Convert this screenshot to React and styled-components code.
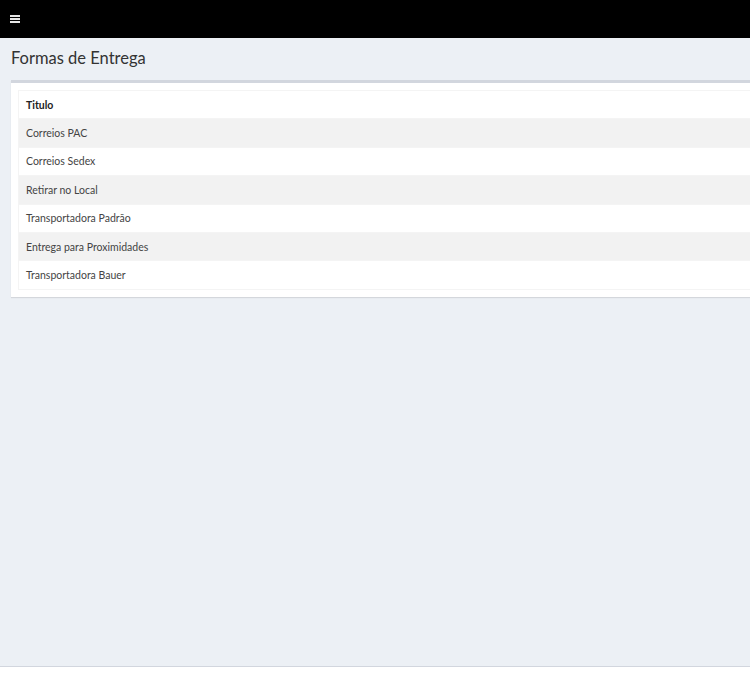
import React from "react";
import styled, { createGlobalStyle } from "styled-components";

const entregas = [
  "Correios PAC",
  "Correios Sedex",
  "Retirar no Local",
  "Transportadora Padrão",
  "Entrega para Proximidades",
  "Transportadora Bauer",
];

const GlobalStyle = createGlobalStyle`
  html, body {
    margin: 0;
    padding: 0;
    overflow: hidden;
  }
  body {
    font-family: Lato, "Noto Sans", sans-serif;
    background: #ecf0f5;
    color: #333;
  }
`;

const Wrapper = styled.div`
  display: flex;
  flex-direction: column;
  min-height: 100vh;
  width: 1000px;
`;

const Navbar = styled.header`
  height: 38px;
  background: #000;
  display: flex;
  align-items: center;
  padding-left: 10px;
`;

const Toggle = styled.button`
  background: none;
  border: 0;
  padding: 0;
  width: 10px;
  height: 8px;
  display: flex;
  flex-direction: column;
  justify-content: space-between;
  cursor: pointer;
  span {
    display: block;
    height: 2px;
    background: #e6e6e6;
  }
`;

const Content = styled.main`
  flex: 1;
  padding: 10px 0 0 11px;
`;

const PageTitle = styled.h1`
  margin: 0 0 12px;
  font-size: 16.5px;
  font-weight: 400;
  color: #333;
  line-height: 20px;
`;

const Box = styled.section`
  background: #fff;
  border-top: 3px solid #d2d6de;
  box-shadow: 0 1px 1px rgba(0, 0, 0, 0.1);
  padding: 7px;
`;

const Table = styled.table`
  width: 100%;
  border-collapse: collapse;
  border: 1px solid #f4f4f4;
  font-size: 10.5px;
  color: #444;
  th,
  td {
    height: 27.4px;
    padding: 0 7px;
    text-align: left;
    border-top: 1px solid #f4f4f4;
  }
  th {
    font-weight: 700;
    color: #222;
  }
  tbody tr:nth-child(odd) {
    background: #f2f2f2;
  }
`;

const Footer = styled.footer`
  height: 23px;
  background: #fff;
  border-top: 1px solid #d2d6de;
`;

export default function App() {
  return (
    <>
      <GlobalStyle />
      <Wrapper>
        <Navbar>
          <Toggle aria-label="menu">
            <span />
            <span />
            <span />
          </Toggle>
        </Navbar>
        <Content>
          <PageTitle>Formas de Entrega</PageTitle>
          <Box>
            <Table>
              <thead>
                <tr>
                  <th>Titulo</th>
                </tr>
              </thead>
              <tbody>
                {entregas.map((nome) => (
                  <tr key={nome}>
                    <td>{nome}</td>
                  </tr>
                ))}
              </tbody>
            </Table>
          </Box>
        </Content>
        <Footer />
      </Wrapper>
    </>
  );
}
